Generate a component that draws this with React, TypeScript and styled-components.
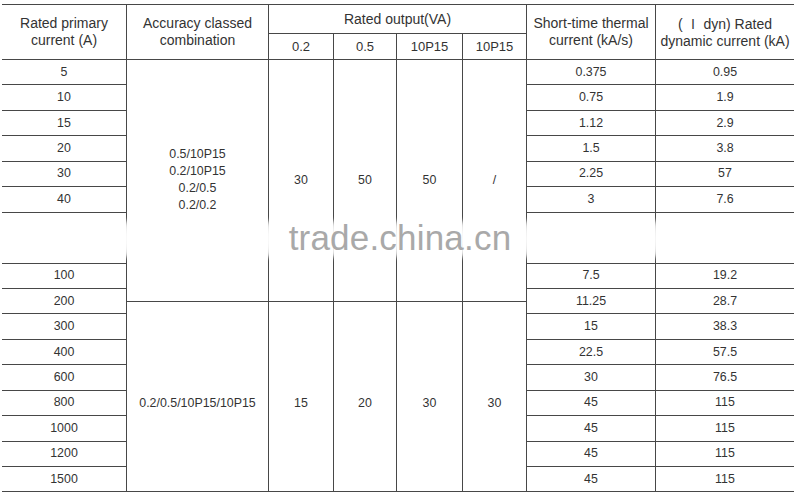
import React from "react";
import styled, { createGlobalStyle } from "styled-components";

const GlobalStyle = createGlobalStyle`
  html, body {
    margin: 0;
    padding: 0;
    background: #ffffff;
  }
  body {
    font-family: "Liberation Sans", Arial, "Noto Sans CJK SC", sans-serif;
    color: #333333;
  }
`;

const Page = styled.div`
  width: 800px;
  height: 501px;
  padding: 4px 0 0 2px;
  box-sizing: border-box;
  position: relative;
  overflow: hidden;
`;

const Grid = styled.div`
  display: grid;
  grid-template-columns: 125px 142px 65px 63px 66px 64px 129px 138px;
  grid-template-rows: 29px 26px repeat(34, 12.725px);
  border-top: 1px solid #474747;
  width: 792px;
`;

const Cell = styled.div<{
  $col: number;
  $colSpan?: number;
  $row: number;
  $rowSpan?: number;
  $last?: boolean;
  $size?: number;
  $shift?: number;
}>`
  grid-column: ${(p) => p.$col} / span ${(p) => p.$colSpan ?? 1};
  grid-row: ${(p) => p.$row} / span ${(p) => p.$rowSpan ?? 1};
  display: flex;
  flex-direction: column;
  align-items: center;
  justify-content: center;
  text-align: center;
  box-sizing: border-box;
  border-bottom: 1px solid #474747;
  border-right: ${(p) => (p.$last ? "none" : "1px solid #474747")};
  font-size: ${(p) => p.$size ?? 12.4}px;
  line-height: 17px;
  padding-top: ${(p) => p.$shift ?? 0}px;
  white-space: nowrap;
`;

const Roman = styled.span`
  font-family: "Noto Sans CJK SC", sans-serif;
  font-size: 13px;
`;

const Watermark = styled.div`
  position: absolute;
  left: 0;
  top: 0;
  width: 800px;
  height: 501px;
  pointer-events: none;
`;

const MarkText = styled.div`
  position: absolute;
  left: 0;
  width: 800px;
  top: 218px;
  text-align: center;
  font-size: 35px;
  letter-spacing: 0.2px;
  color: #a9a9a9;
  font-family: "Liberation Sans", Arial, sans-serif;
`;

const Smudge = styled.div<{ $x: number }>`
  position: absolute;
  top: 220px;
  left: ${(p) => p.$x - 4}px;
  width: 9px;
  height: 38px;
  border-radius: 50%;
  background: #ffffff;
  filter: blur(2px);
`;

const firstCol = [
  "5", "10", "15", "20", "30", "40", "", "100", "200",
  "300", "400", "600", "800", "1000", "1200", "1500",
];
const thermal = [
  "0.375", "0.75", "1.12", "1.5", "2.25", "3", "", "7.5", "11.25",
  "15", "22.5", "30", "45", "45", "45", "45",
];
const dynamic = [
  "0.95", "1.9", "2.9", "3.8", "57", "7.6", "", "19.2", "28.7",
  "38.3", "57.5", "76.5", "115", "115", "115", "115",
];

// body starts at grid row 3; each row is 2 tracks, the blank one 4
const rowStarts = (() => {
  const out: { row: number; span: number }[] = [];
  let r = 3;
  firstCol.forEach((v) => {
    const span = v === "" ? 4 : 2;
    out.push({ row: r, span });
    r += span;
  });
  return out;
})();

const groups = [
  {
    row: 3,
    span: 19,
    shift: 0,
    combo: ["0.5/10P15", "0.2/10P15", "0.2/0.5", "0.2/0.2"],
    values: ["30", "50", "50", "/"],
  },
  {
    row: 22,
    span: 15,
    shift: 14,
    combo: ["0.2/0.5/10P15/10P15"],
    values: ["15", "20", "30", "30"],
  },
];

const smudges = [126, 268, 333, 397, 462, 527, 656];

export default function App() {
  return (
    <Page>
      <GlobalStyle />
      <Grid>
        <Cell $col={1} $row={1} $rowSpan={2} $size={14}>
          <span>Rated primary</span>
          <span>current (A)</span>
        </Cell>
        <Cell $col={2} $row={1} $rowSpan={2} $size={14}>
          <span>Accuracy classed</span>
          <span>combination</span>
        </Cell>
        <Cell $col={3} $colSpan={4} $row={1} $size={14}>
          Rated output(VA)
        </Cell>
        {["0.2", "0.5", "10P15", "10P15"].map((h, i) => (
          <Cell key={i} $col={3 + i} $row={2} $size={13}>
            {h}
          </Cell>
        ))}
        <Cell $col={7} $row={1} $rowSpan={2} $size={14}>
          <span>Short-time thermal</span>
          <span>current (kA/s)</span>
        </Cell>
        <Cell $col={8} $row={1} $rowSpan={2} $size={14} $last>
          <span>
            ( <Roman>Ⅰ</Roman> dyn) Rated
          </span>
          <span>dynamic current (kA)</span>
        </Cell>

        {rowStarts.map((r, i) => (
          <React.Fragment key={i}>
            <Cell $col={1} $row={r.row} $rowSpan={r.span}>
              {firstCol[i]}
            </Cell>
            <Cell $col={7} $row={r.row} $rowSpan={r.span}>
              {thermal[i]}
            </Cell>
            <Cell $col={8} $row={r.row} $rowSpan={r.span} $last>
              {dynamic[i]}
            </Cell>
          </React.Fragment>
        ))}

        {groups.map((g, i) => (
          <React.Fragment key={i}>
            <Cell $col={2} $row={g.row} $rowSpan={g.span} $shift={g.shift}>
              {g.combo.map((c) => (
                <span key={c}>{c}</span>
              ))}
            </Cell>
            {g.values.map((v, j) => (
              <Cell
                key={j}
                $col={3 + j}
                $row={g.row}
                $rowSpan={g.span}
                $shift={g.shift}
              >
                {v}
              </Cell>
            ))}
          </React.Fragment>
        ))}
      </Grid>
      <Watermark>
        {smudges.map((x) => (
          <Smudge key={x} $x={x} />
        ))}
        <MarkText>trade.china.cn</MarkText>
      </Watermark>
    </Page>
  );
}
